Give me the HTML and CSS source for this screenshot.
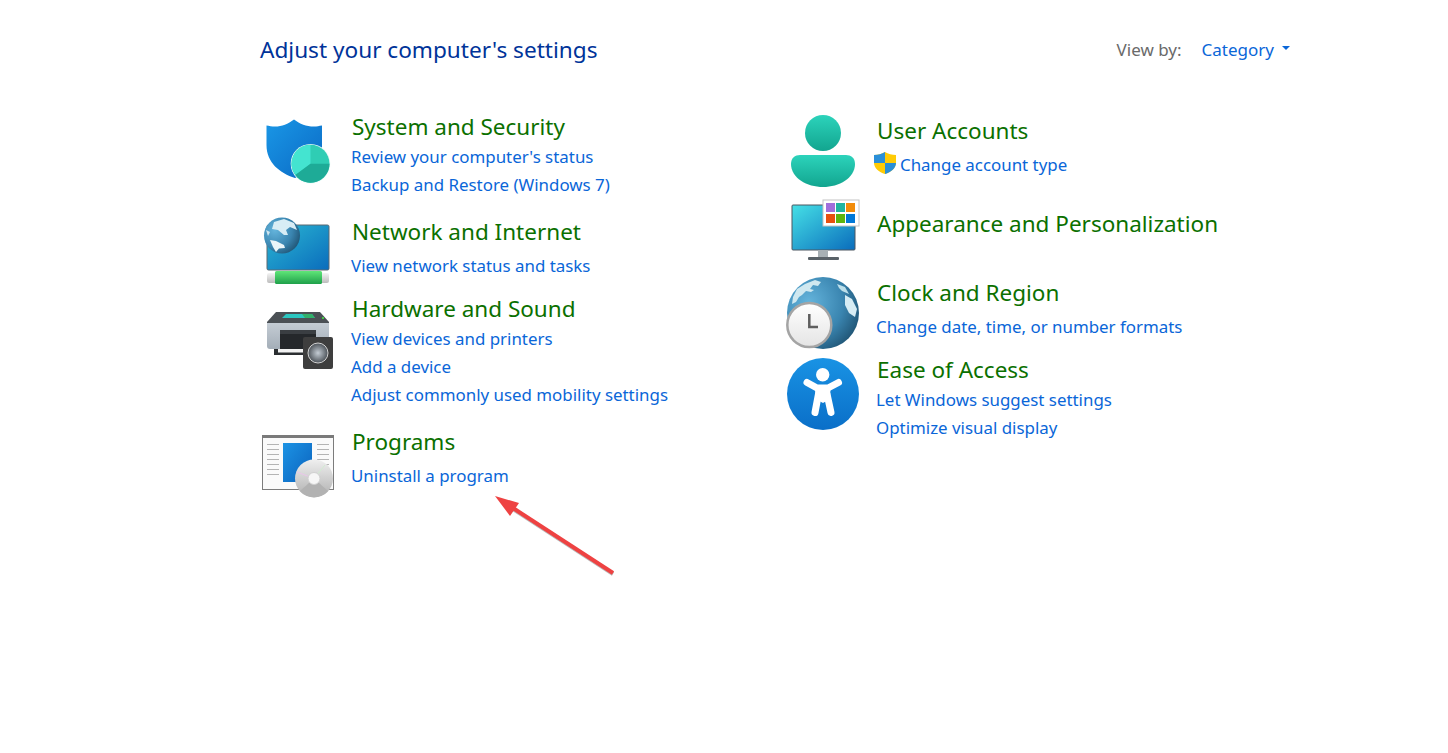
FILE: index.html
```html
<!DOCTYPE html>
<html lang="en">
<head>
<meta charset="utf-8">
<title>Control Panel</title>
<link rel="stylesheet" href="styles.css">
</head>
<body>
<svg class="defs" width="0" height="0" aria-hidden="true">
  <defs>
    <linearGradient id="gBlue" x1="0" y1="0" x2="1" y2="1"><stop offset="0" stop-color="#1a97e6"/><stop offset="1" stop-color="#0a69c4"/></linearGradient>
    <linearGradient id="gTeal" x1="0" y1="0" x2="0" y2="1"><stop offset="0" stop-color="#2cd3bb"/><stop offset="1" stop-color="#12a58f"/></linearGradient>
    <linearGradient id="gScreen" x1="0" y1="0" x2="1" y2="1"><stop offset="0" stop-color="#2bb8d3"/><stop offset="1" stop-color="#0a6cbc"/></linearGradient>
    <linearGradient id="gScreen2" x1="0" y1="0" x2="1" y2="1"><stop offset="0" stop-color="#45e0e6"/><stop offset="1" stop-color="#0a6cbc"/></linearGradient>
    <linearGradient id="gGreen" x1="0" y1="0" x2="0" y2="1"><stop offset="0" stop-color="#5fe678"/><stop offset="1" stop-color="#1fa04a"/></linearGradient>
    <linearGradient id="gBar" x1="0" y1="0" x2="0" y2="1"><stop offset="0" stop-color="#f4f4f4"/><stop offset="1" stop-color="#bdbdbd"/></linearGradient>
    <radialGradient id="gGlobe" cx="0.3" cy="0.35" r="0.8"><stop offset="0" stop-color="#64b4dc"/><stop offset="0.6" stop-color="#3a85b0"/><stop offset="1" stop-color="#1d4f6e"/></radialGradient>
    <radialGradient id="gCone" cx="0.5" cy="0.5" r="0.5"><stop offset="0" stop-color="#c4ccd4"/><stop offset="1" stop-color="#4c5258"/></radialGradient>
    <linearGradient id="gAccess" x1="0" y1="0" x2="0" y2="1"><stop offset="0" stop-color="#1993e4"/><stop offset="1" stop-color="#0a6fc8"/></linearGradient>
    <linearGradient id="gPanel" x1="0" y1="0" x2="1" y2="1"><stop offset="0" stop-color="#1c93e4"/><stop offset="1" stop-color="#0b62bd"/></linearGradient>
    <linearGradient id="gCd" x1="0" y1="0" x2="0" y2="1"><stop offset="0" stop-color="#efefef"/><stop offset="1" stop-color="#b0b0b0"/></linearGradient>
    <linearGradient id="gFace" x1="0" y1="0" x2="0" y2="1"><stop offset="0" stop-color="#ffffff"/><stop offset="1" stop-color="#e4e4e4"/></linearGradient>
    <linearGradient id="gBody" x1="0" y1="0" x2="0" y2="1"><stop offset="0" stop-color="#c4ccd4"/><stop offset="1" stop-color="#a4aeb8"/></linearGradient>
  </defs>
</svg>
<main class="page">
  <header class="top">
    <h1 class="heading">Adjust your computer's settings</h1>
    <div class="viewby">
      <span class="viewby-label">View by:</span>
      <a class="viewby-value" href="#">Category</a>
      <span class="caret"></span>
    </div>
  </header>
  <div class="columns">
    <section class="column column-left">
      <article class="category cat-system">
        <svg class="icon" viewBox="0 0 72 72">
          <path d="M32 4.500 C38 9 44 11.500 52 11.500 C55 11.500 57 11 60 10.500 V32 C60 48 46 58 33 63 C18 58 4.500 48 4.500 30 V10.500 C7 11 10 11.500 13 11.500 C20 11.500 26 9 32 4.500Z" fill="url(#gBlue)"/>
          <circle cx="48.500" cy="48.700" r="19.800" fill="#eafaf7"/>
          <circle cx="48.500" cy="48.700" r="19" fill="#2fcdb4"/>
          <path d="M48.500 48.700 V29.700 A19 19 0 0 0 33.300 60.100Z" fill="#44e4d0"/>
          <path d="M48.500 48.700 L33.300 60.100 A19 19 0 0 0 67.500 48.700Z" fill="#1eab97"/>
        </svg>
        <div class="text">
          <h2 class="title">System and Security</h2>
          <ul class="links near">
            <li><a href="#">Review your computer's status</a></li>
            <li><a href="#">Backup and Restore (Windows 7)</a></li>
          </ul>
        </div>
      </article>
      <article class="category cat-network">
        <svg class="icon" viewBox="0 0 72 72">
          <rect x="5" y="10" width="62" height="45" rx="1.500" fill="url(#gScreen)" stroke="#5c6870" stroke-width="1"/>
          <rect x="5" y="58" width="62" height="10" rx="2" fill="url(#gBar)"/>
          <rect x="13" y="56" width="47" height="13" rx="1.500" fill="url(#gGreen)"/>
          <circle cx="20" cy="20.500" r="18" fill="url(#gGlobe)"/>
          <path d="M12 7 L22 4 L32 8 L35 15 L28 12 L24 15 L26 20 L22 20 L16 15 L10 14Z" fill="#d8edf5"/>
          <path d="M8 25 L14 26 L22 30 L23 33 L17 33.500 L14 37 L11 32Z" fill="#eaf5f9"/>
          <path d="M4 15 L8 17 L6 21Z" fill="#cfe6f0"/>
        </svg>
        <div class="text">
          <h2 class="title">Network and Internet</h2>
          <ul class="links far">
            <li><a href="#">View network status and tasks</a></li>
          </ul>
        </div>
      </article>
      <article class="category cat-hardware">
        <svg class="icon" viewBox="0 0 72 72">
          <path d="M14 7 H58 L67 17 V19 H5 V17Z" fill="#4b5055"/>
          <path d="M24 9 H50 L53 13 H20Z" fill="#2bc6c0"/>
          <path d="M40 9 H50 L53 13 H43Z" fill="#32b06a"/>
          <path d="M5 18 H67 V41 Q67 44 64 44 H8 Q5 44 5 41Z" fill="url(#gBody)"/>
          <rect x="18" y="25" width="36" height="19" fill="#25282b"/>
          <rect x="18" y="25" width="36" height="4" fill="#3a3e42"/>
          <rect x="12" y="44" width="38" height="6" fill="#2b2e31"/>
          <rect x="16" y="44" width="30" height="3.500" fill="#f2f2f2"/>
          <rect x="60" y="12" width="2" height="2" fill="#45c845"/>
          <rect x="41" y="32" width="30" height="32" rx="2" fill="#3e3e3e"/>
          <circle cx="56" cy="48" r="10" fill="url(#gCone)" stroke="#d2d2d2" stroke-width="1"/>
        </svg>
        <div class="text">
          <h2 class="title">Hardware and Sound</h2>
          <ul class="links near">
            <li><a href="#">View devices and printers</a></li>
            <li><a href="#">Add a device</a></li>
            <li><a href="#">Adjust commonly used mobility settings</a></li>
          </ul>
        </div>
      </article>
      <article class="category cat-programs">
        <svg class="icon" viewBox="0 0 72 72">
          <rect x="0.500" y="0.500" width="71" height="54" fill="#fafafa" stroke="#7c7c7c"/>
          <rect x="0" y="0" width="72" height="3" fill="#7a7a7a"/>
          <path d="M5 9.500H17M5 14.500H17M5 19.500H17M5 24.500H17M5 29.500H17M5 34.500H17M5 39.500H17M55 9.500H67M55 14.500H67M55 19.500H67M55 24.500H67M55 29.500H67" stroke="#b4b4b4" stroke-width="1" fill="none"/>
          <rect x="21" y="8" width="29" height="39" fill="url(#gPanel)"/>
          <circle cx="52" cy="43.500" r="19" fill="url(#gCd)"/>
          <path d="M52 43.500 L38 56 A19 19 0 0 0 66 56Z" fill="#b2b2b2"/>
          <path d="M52 43.500 L35 37" stroke="#eac6ea" stroke-width="1"/>
          <path d="M52 43.500 L63 30" stroke="#d2ecd2" stroke-width="1"/>
          <circle cx="52" cy="43.500" r="6" fill="#f6f6f6" stroke="#d0d0d0"/>
        </svg>
        <div class="text">
          <h2 class="title">Programs</h2>
          <ul class="links far">
            <li><a href="#">Uninstall a program</a></li>
          </ul>
        </div>
      </article>
    </section>
    <section class="column column-right">
      <article class="category cat-user">
        <svg class="icon" viewBox="0 0 72 72">
          <circle cx="36" cy="18" r="18" fill="url(#gTeal)"/>
          <path d="M4 49 C4 43 8 40 13 40 H59 C64 40 68 43 68 49 C68 63 52 72 36 72 C20 72 4 63 4 49Z" fill="url(#gTeal)"/>
        </svg>
        <div class="text">
          <h2 class="title">User Accounts</h2>
          <ul class="links far">
            <li class="shielded">
              <svg class="shield" viewBox="0 0 22 22">
                <path d="M11 0 C14 2 18 3 22 3 V11 C22 16 17 20 11 22 C5 20 0 16 0 11 V3 C4 3 8 2 11 0Z" fill="#ffcb05"/>
                <path d="M11 0 V11 H0 V3 C4 3 8 2 11 0Z" fill="#2a8fd8"/>
                <path d="M11 11 H22 C22 16 17 20 11 22Z" fill="#2a8fd8"/>
              </svg>
              <a href="#">Change account type</a>
            </li>
          </ul>
        </div>
      </article>
      <article class="category cat-appearance">
        <svg class="icon" viewBox="0 0 72 72">
          <rect x="5" y="5" width="63" height="45" rx="1" fill="url(#gScreen2)" stroke="#4c5660" stroke-width="1"/>
          <rect x="31" y="50" width="10" height="7" fill="#a8b0b4"/>
          <rect x="21" y="57" width="31" height="3" rx="1" fill="#5a6268"/>
          <rect x="36" y="0" width="36" height="26" fill="#fff" stroke="#c4c4c4"/>
          <rect x="39" y="3" width="9" height="9" fill="#a06fdb"/>
          <rect x="49" y="3" width="9" height="9" fill="#1fb5a0"/>
          <rect x="59" y="3" width="9" height="9" fill="#f28c0a"/>
          <rect x="39" y="14" width="9" height="9" fill="#e8500f"/>
          <rect x="49" y="14" width="9" height="9" fill="#5cb50f"/>
          <rect x="59" y="14" width="9" height="9" fill="#0078d7"/>
        </svg>
        <div class="text">
          <h2 class="title">Appearance and Personalization</h2>
        </div>
      </article>
      <article class="category cat-clock">
        <svg class="icon" viewBox="0 0 72 72">
          <circle cx="36" cy="36" r="36" fill="url(#gGlobe)"/>
          <path d="M6 20 L10 12 L18 7 L28 3 L34 5 L31 9 L26 8 L23 12 L27 13 L24 15 L19 14 L15 18 L12 20 L9 25 L5 27Z" fill="#cfe8f0"/>
          <path d="M50 7 L58 10 L62 17 L55 14 L52 11Z" fill="#bcdfea"/>
          <path d="M58 18 L65 22 L70 32 L68 40 L62 36 L58 28Z" fill="#d6ecf4"/>
          <circle cx="22.300" cy="48" r="22" fill="url(#gFace)" stroke="#a4a4a4" stroke-width="2.500"/>
          <path d="M22.300 37 V50 H31" fill="none" stroke="#5e5e5e" stroke-width="2.500"/>
        </svg>
        <div class="text">
          <h2 class="title">Clock and Region</h2>
          <ul class="links far">
            <li><a href="#">Change date, time, or number formats</a></li>
          </ul>
        </div>
      </article>
      <article class="category cat-ease">
        <svg class="icon" viewBox="0 0 72 72">
          <circle cx="36" cy="36" r="36" fill="url(#gAccess)"/>
          <circle cx="35.700" cy="16.700" r="6.700" fill="#fff"/>
          <path d="M20 24.500 L30 30 H41 L51.500 24.500" fill="none" stroke="#fff" stroke-width="7" stroke-linecap="round" stroke-linejoin="round"/>
          <path d="M31.500 36 L28 54.500 M40 36 L44 54.500" fill="none" stroke="#fff" stroke-width="7" stroke-linecap="round"/>
          <path d="M28 30 H43.500 L43 41 L36 45 L28.500 41Z" fill="#fff"/>
        </svg>
        <div class="text">
          <h2 class="title">Ease of Access</h2>
          <ul class="links near">
            <li><a href="#">Let Windows suggest settings</a></li>
            <li><a href="#">Optimize visual display</a></li>
          </ul>
        </div>
      </article>
    </section>
  </div>
  <svg class="arrow" viewBox="0 0 130 90">
    <path class="arrow-shadow" d="M122 79 L22 14"/>
    <path class="arrow-line" d="M122 78 L22 13"/>
    <path class="arrow-head" d="M4 1 L28 8 L19 21Z"/>
  </svg>
</main>
</body>
</html>
```
FILE: styles.css
```css
* { box-sizing: border-box; }
html, body { margin: 0; padding: 0; background: #fff; }
body { font-family: "Noto Sans", "Liberation Sans", sans-serif; overflow: hidden; }
.defs { position: absolute; }
.page { position: relative; width: 1448px; height: 753px; padding: 34px 158px 0 260px; }
.top { display: flex; justify-content: space-between; align-items: center; height: 32px; }
.heading { margin: 0; font-size: 22.6px; font-weight: 400; color: #003399; line-height: 32px; }
.viewby { display: flex; align-items: center; font-size: 17px; line-height: 32px; }
.viewby-label { color: #6a6a6a; margin-right: 20px; }
.viewby-value { color: #0a66d8; text-decoration: none; margin-right: 8px; }
.caret { width: 0; height: 0; margin-top: -4px; border-left: 4px solid transparent; border-right: 4px solid transparent; border-top: 4px solid #0a66d8; }
.columns { display: flex; }
.column { display: flex; flex-direction: column; }
.column-left { width: 525px; padding-top: 47px; }
.column-right { padding-left: 2px; padding-top: 51px; }
.category { display: flex; align-items: flex-start; }
.icon { flex: none; width: 72px; height: 72px; display: block; overflow: visible; margin-bottom: -100px; }
.column-left .icon { margin-left: 2px; }
.text { margin-left: 18px; }
.title { margin: 0; font-size: 22.5px; font-weight: 400; line-height: 28px; color: #0b7000; }
.links { margin: 0; padding: 0; list-style: none; margin-left: -1px; font-size: 16.9px; line-height: 28px; }
.links.near { margin-top: 2px; }
.links.far { margin-top: 6px; }
.links a { color: #0a66d8; text-decoration: none; }
.shielded { position: relative; padding-left: 26px; margin-left: -2px; }
.shield { position: absolute; left: 0; top: 1px; width: 22px; height: 22px; }
.cat-system .icon { margin-top: 2px; }
.cat-network { margin-top: 19px; }
.cat-network .icon { margin-top: -3px; }
.cat-hardware { margin-top: 15px; }
.cat-hardware .icon { margin-top: 10px; }
.cat-programs { margin-top: 19px; }
.cat-programs .icon { margin-top: 7px; }
.cat-user .icon { margin-top: -2px; }
.cat-appearance { margin-top: 31px; }
.cat-appearance .icon { margin-top: -10px; }
.cat-clock { margin-top: 41px; }
.cat-clock .icon { margin-top: -2px; }
.cat-ease { margin-top: 15px; }
.cat-ease .icon { margin-top: 2px; }
.arrow { position: absolute; left: 491px; top: 495px; width: 130px; height: 90px; overflow: visible; }
.arrow-line { fill: none; stroke: #ee4242; stroke-width: 4; }
.arrow-shadow { fill: none; stroke: #8a8a8a; stroke-width: 4; opacity: .6; }
.arrow-head { fill: #ee4242; }
```
